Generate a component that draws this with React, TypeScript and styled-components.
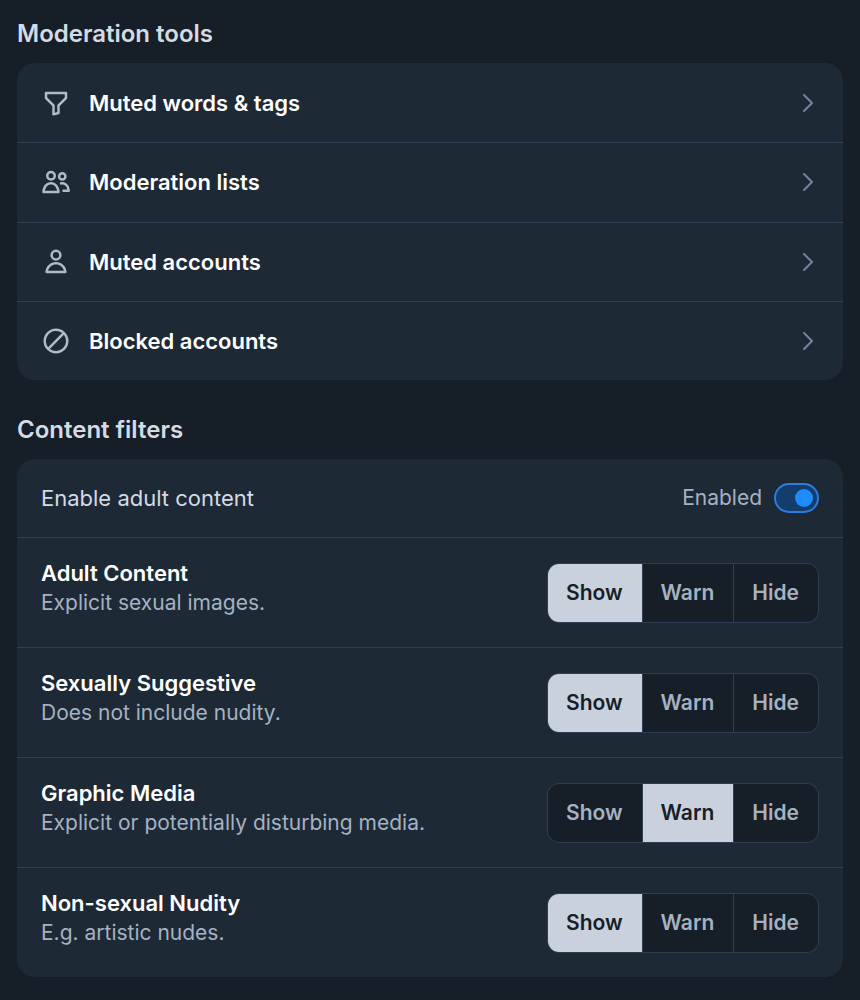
import React, { useId, useState } from "react";
import styled, { createGlobalStyle } from "styled-components";

const color = {
  page: "#161e27",
  card: "#1e2936",
  line: "#2f4053",
  heading: "#d4dbe4",
  strong: "#ffffff",
  body: "#d4dbe4",
  muted: "#a5b2c1",
  icon: "#aebbc9",
  chevron: "#6f869f",
  selected: "#c9d1dc",
  accent: "#208bfe",
  accentLine: "#2b7de0",
  accentDark: "#143d6b",
};

const GlobalStyle = createGlobalStyle`
  *, *::before, *::after { box-sizing: border-box; }
  body {
    margin: 0;
    background: ${color.page};
    color: ${color.body};
    font-family: Inter, "Liberation Sans", sans-serif;
    font-size: 21px;
    line-height: 30px;
    -webkit-font-smoothing: antialiased;
  }
`;

const Page = styled.main`
  display: flex;
  flex-direction: column;
  gap: 32px;
  padding: 16px 17px 24px;
`;

const Section = styled.section`
  display: flex;
  flex-direction: column;
  gap: 12px;
`;

const Heading = styled.h2`
  margin: 0;
  font-size: 24px;
  line-height: 35px;
  font-weight: 600;
  color: ${color.heading};
`;

const Card = styled.div`
  border-radius: 18px;
  background: ${color.card};
  overflow: hidden;

  > * + * {
    border-top: 1px solid ${color.line};
  }
`;

const LinkCard = styled(Card).attrs({ as: "nav" })`
  display: grid;
  grid-auto-rows: 1fr;
  min-height: 317px;
`;

const LinkRow = styled.a`
  display: flex;
  align-items: center;
  gap: 18px;
  padding: 0 24px;
  color: ${color.strong};
  font-size: 22px;
  font-weight: 600;
  text-decoration: none;
`;

const RowLabel = styled.span`
  flex: 1;
`;

const Icon = styled.svg<{ $size: number; $tone: string }>`
  flex: none;
  width: ${(p) => p.$size}px;
  height: ${(p) => p.$size}px;
  fill: ${(p) => p.$tone};
`;

const ToggleRow = styled.div`
  display: flex;
  align-items: center;
  justify-content: space-between;
  min-height: 78px;
  padding: 0 24px;
`;

const ToggleTitle = styled.span`
  font-size: 22px;
`;

const ToggleControl = styled.label`
  display: flex;
  align-items: center;
  gap: 12px;
  color: ${color.muted};
  cursor: pointer;
`;

const Switch = styled.input`
  appearance: none;
  display: flex;
  align-items: center;
  width: 45px;
  height: 30px;
  margin: 0;
  padding: 0 4px;
  border: 2px solid ${color.line};
  border-radius: 15px;
  background: ${color.page};
  cursor: pointer;

  &::before {
    content: "";
    width: 18px;
    height: 18px;
    border-radius: 50%;
    background: ${color.muted};
  }

  &:checked {
    justify-content: flex-end;
    border-color: ${color.accentLine};
    background: ${color.accentDark};
  }

  &:checked::before {
    background: ${color.accent};
  }
`;

const FilterRow = styled.div`
  display: flex;
  align-items: center;
  justify-content: space-between;
  gap: 24px;
  min-height: 110px;
  padding: 0 24px;
`;

const FilterText = styled.div`
  padding-bottom: 9px;
`;

const FilterTitle = styled.h3`
  margin: 0;
  font-size: 22px;
  line-height: 30px;
  font-weight: 600;
  color: ${color.strong};
`;

const FilterNote = styled.p`
  margin: 0;
  color: ${color.muted};
`;

const Segments = styled.div`
  display: flex;
  flex: none;
  height: 60px;
  border: 1px solid ${color.line};
  border-radius: 12px;
  background: ${color.page};
  overflow: hidden;
`;

const Segment = styled.label`
  display: flex;
  align-items: center;
  padding: 0 19px 0 18px;
  color: ${color.muted};
  font-weight: 600;
  cursor: pointer;

  & + & {
    border-left: 1px solid ${color.line};
  }

  &:has(input:checked) {
    background: ${color.selected};
    color: ${color.page};
  }
`;

const SegmentInput = styled.input`
  appearance: none;
  width: 0;
  height: 0;
  margin: 0;
`;

const links = [
  {
    label: "Muted words & tags",
    path: "M3 4a1 1 0 0 1 1-1h16a1 1 0 0 1 1 1v4a1 1 0 0 1-.293.707L15 14.414V20a1 1 0 0 1-.758.97l-4 1A1 1 0 0 1 9 21v-6.586L3.293 8.707A1 1 0 0 1 3 8V4Zm2 1v2.586l5.707 5.707A1 1 0 0 1 11 14v5.72l2-.5V14a1 1 0 0 1 .293-.707L19 7.586V5H5Z",
  },
  {
    label: "Moderation lists",
    path: "M8 5a2 2 0 1 0 0 4 2 2 0 0 0 0-4ZM4 7a4 4 0 1 1 8 0 4 4 0 0 1-8 0Zm13-1a1.5 1.5 0 1 0 0 3 1.5 1.5 0 0 0 0-3Zm-3.5 1.5a3.5 3.5 0 1 1 7 0 3.5 3.5 0 0 1-7 0Zm5.826 7.376c-.919-.779-2.052-1.03-3.1-.787a1 1 0 0 1-.451-1.949c1.671-.386 3.45.028 4.844 1.211 1.397 1.185 2.348 3.084 2.524 5.579a1 1 0 0 1-.997 1.07H18a1 1 0 1 1 0-2h3.007c-.29-1.47-.935-2.49-1.681-3.124ZM3.126 19h9.747c-.61-3.495-2.867-5-4.873-5-2.006 0-4.263 1.505-4.873 5ZM8 12c3.47 0 6.64 2.857 6.998 7.93A1 1 0 0 1 14 21H2a1 1 0 0 1-.998-1.07C1.36 14.857 4.53 12 8 12Z",
  },
  {
    label: "Muted accounts",
    path: "M12 4a2.5 2.5 0 1 0 0 5 2.5 2.5 0 0 0 0-5ZM7.5 6.5a4.5 4.5 0 1 1 9 0 4.5 4.5 0 0 1-9 0ZM5.678 19h12.644c-.71-2.909-3.092-5-6.322-5s-5.613 2.091-6.322 5Zm-2.174.906C3.917 15.521 7.242 12 12 12c4.758 0 8.083 3.521 8.496 7.906A1 1 0 0 1 19.5 21h-15a1 1 0 0 1-.996-1.094Z",
  },
  {
    label: "Blocked accounts",
    path: "M12 4a8 8 0 0 0-6.32 12.906L16.906 5.68A7.962 7.962 0 0 0 12 4Zm6.32 3.094L7.094 18.32A8 8 0 0 0 18.32 7.094ZM2 12C2 6.477 6.477 2 12 2a9.972 9.972 0 0 1 7.071 2.929A9.972 9.972 0 0 1 22 12c0 5.523-4.477 10-10 10a9.972 9.972 0 0 1-7.071-2.929A9.972 9.972 0 0 1 2 12Z",
  },
];

const chevronPath =
  "M8.293 3.293a1 1 0 0 1 1.414 0l8 8a1 1 0 0 1 0 1.414l-8 8a1 1 0 0 1-1.414-1.414L15.586 12 8.293 4.707a1 1 0 0 1 0-1.414Z";

const choices = ["Show", "Warn", "Hide"];

const filters = [
  { title: "Adult Content", note: "Explicit sexual images.", initial: "Show" },
  { title: "Sexually Suggestive", note: "Does not include nudity.", initial: "Show" },
  { title: "Graphic Media", note: "Explicit or potentially disturbing media.", initial: "Warn" },
  { title: "Non-sexual Nudity", note: "E.g. artistic nudes.", initial: "Show" },
];

function Filter({ title, note, initial }: { title: string; note: string; initial: string }) {
  const [value, setValue] = useState(initial);
  const id = useId();
  return (
    <FilterRow>
      <FilterText>
        <FilterTitle id={id}>{title}</FilterTitle>
        <FilterNote>{note}</FilterNote>
      </FilterText>
      <Segments role="radiogroup" aria-labelledby={id}>
        {choices.map((choice) => (
          <Segment key={choice}>
            <SegmentInput
              type="radio"
              name={id}
              value={choice}
              checked={value === choice}
              onChange={() => setValue(choice)}
            />
            {choice}
          </Segment>
        ))}
      </Segments>
    </FilterRow>
  );
}

export default function App() {
  const [adult, setAdult] = useState(true);
  return (
    <>
      <GlobalStyle />
      <Page>
        <Section>
          <Heading>Moderation tools</Heading>
          <LinkCard>
            {links.map(({ label, path }) => (
              <LinkRow key={label} href="#">
                <Icon viewBox="0 0 24 24" $size={30} $tone={color.icon} aria-hidden="true">
                  <path fillRule="evenodd" clipRule="evenodd" d={path} />
                </Icon>
                <RowLabel>{label}</RowLabel>
                <Icon viewBox="0 0 24 24" $size={24} $tone={color.chevron} aria-hidden="true">
                  <path d={chevronPath} />
                </Icon>
              </LinkRow>
            ))}
          </LinkCard>
        </Section>
        <Section>
          <Heading>Content filters</Heading>
          <Card>
            <ToggleRow>
              <ToggleTitle id="adult-label">Enable adult content</ToggleTitle>
              <ToggleControl>
                {adult ? "Enabled" : "Disabled"}
                <Switch
                  type="checkbox"
                  role="switch"
                  aria-labelledby="adult-label"
                  checked={adult}
                  onChange={(e) => setAdult(e.target.checked)}
                />
              </ToggleControl>
            </ToggleRow>
            {filters.map((filter) => (
              <Filter key={filter.title} {...filter} />
            ))}
          </Card>
        </Section>
      </Page>
    </>
  );
}
